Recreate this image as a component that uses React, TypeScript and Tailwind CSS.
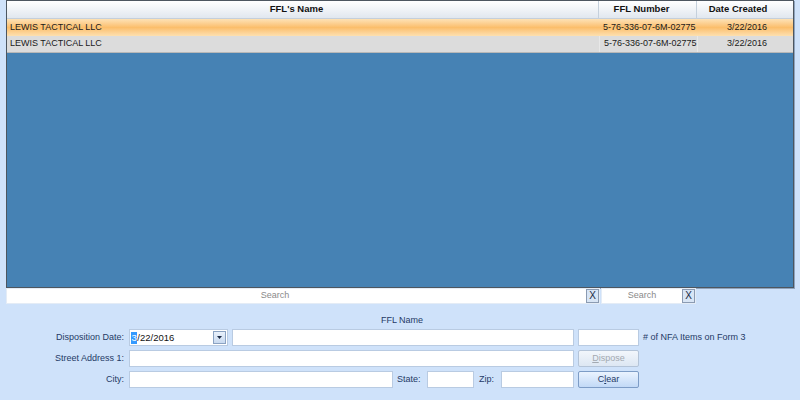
import React from "react";

const font = { fontFamily: '"Liberation Sans", Arial, sans-serif' };

function XBtn() {
  return (
    <div className="w-[13px] h-[14px] border border-[#8b9bb2] bg-[#d8e5f5] flex items-center justify-center text-[10px] leading-none text-[#1b2a44]">
      X
    </div>
  );
}

function Input({ w }: { w: string }) {
  return <div className={`${w} h-[17px] bg-white border border-[#b9cbe2]`} />;
}

export default function App() {
  return (
    <div className="w-[800px] h-[400px] bg-[#cfe2fa] text-[9px] overflow-hidden" style={font}>
      <div className="pl-[6px] pr-[6px]">
        {/* Grid */}
        <div className="h-[288px] border border-[#4d5660] bg-[#4682b4] flex flex-col shadow-[1px_1px_0_#8ea3bd]">
          <div className="h-[18px] flex bg-gradient-to-b from-[#ffffff] to-[#e1e7ef] border-b border-[#c5cfdb] font-bold text-[#111] text-[9.5px]">
            <div className="flex-1 flex items-center justify-center pr-[12px] border-r border-[#c5d0dc]">FFL's Name</div>
            <div className="w-[98px] flex items-center justify-center pr-[12px] border-r border-[#c5d0dc]">FFL Number</div>
            <div className="w-[96px] flex items-center justify-center pr-[14px]">Date Created</div>
          </div>
          <div className="h-[17px] flex bg-gradient-to-b from-[#fde2b6] via-[#fbbe6b] to-[#fde0b0] text-[#1a1a1a]">
            <div className="flex-1 flex items-center pl-[3px]">LEWIS TACTICAL LLC</div>
            <div className="w-[98px] flex items-center pl-[4px]">5-76-336-07-6M-02775</div>
            <div className="w-[96px] flex items-center justify-end pr-[26px]">3/22/2016</div>
          </div>
          <div className="h-[17px] flex bg-[#dcdcdc] text-[#1a1a1a] border-b border-[#b8b8b8]">
            <div className="flex-1 flex items-center pl-[3px]">LEWIS TACTICAL LLC</div>
            <div className="w-[98px] flex items-center pl-[4px] border-l border-[#e8e8e8]">5-76-336-07-6M-02775</div>
            <div className="w-[96px] flex items-center justify-end pr-[26px] border-l border-[#e8e8e8]">3/22/2016</div>
          </div>
        </div>
        {/* Search row */}
        <div className="flex h-[16px]">
          <div className="w-[594px] h-[16px] bg-white border border-[#e4ecf6] flex items-center pl-[1px]">
            <div className="flex-1 text-center text-[#8a8a8a] pr-[44px]">Search</div>
            <XBtn />
          </div>
          <div className="w-[95px] h-[16px] bg-white border border-[#e4ecf6] flex items-center ml-[1px]">
            <div className="flex-1 text-center text-[#8a8a8a]">Search</div>
            <XBtn />
          </div>
        </div>
      </div>
      {/* FFL Name label */}
      <div className="mt-[11px] h-[12px] flex items-center justify-center pl-[4px] text-[#1f3a66]">FFL Name</div>
      {/* Form */}
      <div className="flex flex-col gap-[4px] mt-[2px] text-[#1f3a66]">
        <div className="flex items-center h-[17px]">
          <div className="w-[125px] text-right pr-[1px]">Disposition Date:</div>
          <div className="ml-[4px] w-[99px] h-[17px] bg-white border border-[#b9cbe2] flex items-center">
            <div className="flex-1 flex items-center pl-[1px] text-[#111] text-[9.5px] leading-[12px]">
              <span className="inline-block bg-[#3399ff] text-white px-[0.5px] h-[12px]">3</span>
              <span>/22/2016</span>
            </div>
            <div className="w-[13px] h-[13px] mr-[1px] border border-[#8aa2c2] bg-gradient-to-b from-[#e9f1fb] to-[#c9daf0] flex items-center justify-center">
              <svg width="5" height="3" viewBox="0 0 5 3"><path d="M0 0h5L2.5 3z" fill="#1b2a44" /></svg>
            </div>
          </div>
          <div className="ml-[4px]"><Input w="w-[342px]" /></div>
          <div className="ml-[4px]"><Input w="w-[61px]" /></div>
          <div className="ml-[4px]"># of NFA Items on Form 3</div>
        </div>
        <div className="flex items-center h-[17px]">
          <div className="w-[125px] text-right pr-[1px]">Street Address 1:</div>
          <div className="ml-[4px]"><Input w="w-[445px]" /></div>
          <div className="ml-[4px] w-[61px] h-[17px] border border-[#b4c4d8] rounded-[2px] bg-gradient-to-b from-[#f2f6fb] to-[#dde7f3] flex items-center justify-center text-[#a3a9b1]">
            <span><span className="underline">D</span>ispose</span>
          </div>
        </div>
        <div className="flex items-center h-[17px]">
          <div className="w-[125px] text-right pr-[1px]">City:</div>
          <div className="ml-[4px]"><Input w="w-[264px]" /></div>
          <div className="ml-[4px] w-[25px]">State:</div>
          <div className="ml-[5px]"><Input w="w-[47px]" /></div>
          <div className="ml-[5px] w-[17px]">Zip:</div>
          <div className="ml-[5px]"><Input w="w-[73px]" /></div>
          <div className="ml-[4px] w-[61px] h-[17px] border border-[#7d9cc6] rounded-[2px] bg-gradient-to-b from-[#eaf3ff] to-[#c2d9f6] flex items-center justify-center text-[#1f3a66]">
            <span>C<span className="underline">l</span>ear</span>
          </div>
        </div>
      </div>
    </div>
  );
}
